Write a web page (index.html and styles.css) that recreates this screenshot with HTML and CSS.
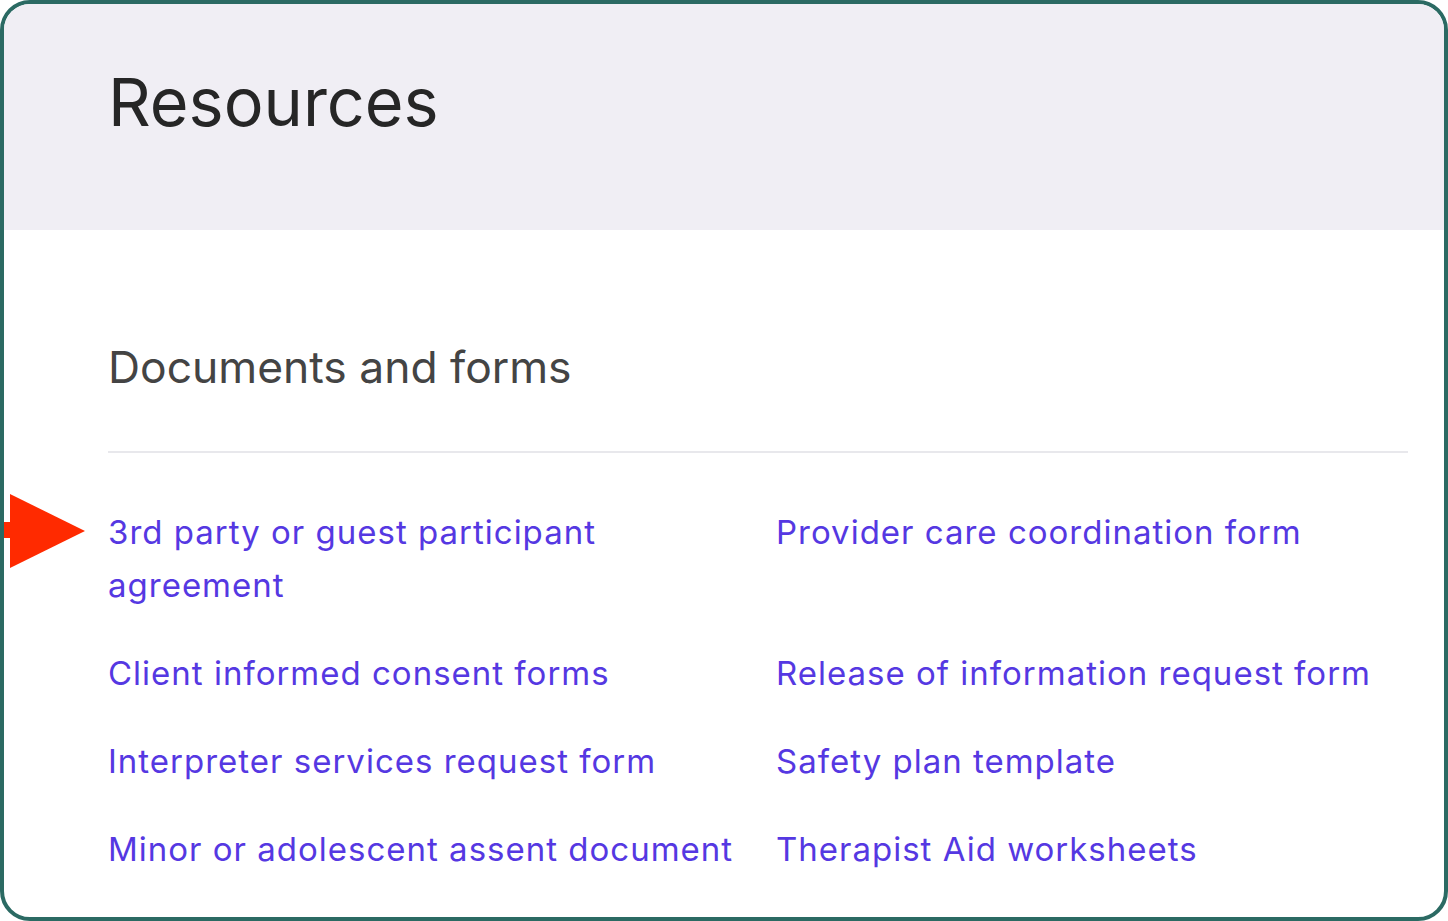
FILE: index.html
```html
<!DOCTYPE html>
<html lang="en">
<head>
    <meta charset="UTF-8">
    <meta name="viewport" content="width=device-width, initial-scale=1.0">
    <title>Resources</title>
    <link rel="stylesheet" href="styles.css">
</head>
<body>

    <div class="frame">
        <header class="page-header">
            <h1>Resources</h1>
        </header>

        <section class="content">
            <h2>Documents and forms</h2>

            <div class="link-grid">
                <div class="link-item">
                    <!-- Flecha que marca el primer documento -->
                    <svg class="pointer" width="86" height="76" viewBox="0 0 86 76">
                        <rect x="0" y="29" width="12" height="16" fill="#ff2a00"/>
                        <polygon points="10,1 85,38 10,75" fill="#ff2a00"/>
                    </svg>
                    <a href="#">3rd party or guest participant agreement</a>
                </div>
                <div class="link-item"><a href="#">Provider care coordination form</a></div>
                <div class="link-item"><a href="#">Client informed consent forms</a></div>
                <div class="link-item"><a href="#">Release of information request form</a></div>
                <div class="link-item"><a href="#">Interpreter services request form</a></div>
                <div class="link-item"><a href="#">Safety plan template</a></div>
                <div class="link-item"><a href="#">Minor or adolescent assent document</a></div>
                <div class="link-item"><a href="#">Therapist Aid worksheets</a></div>
            </div>
        </section>
    </div>

</body>
</html>
```

FILE: styles.css
```css
/* Estilo general */
body {
    font-family: Inter, "Noto Sans", sans-serif;
    background-color: #ffffff;
    margin: 0;
    padding: 0;
}
.frame {
    box-sizing: border-box;
    width: 1448px;
    height: 921px;
    border: 4px solid #2b6a63;
    border-radius: 30px;
    overflow: hidden;
    background-color: #fff;
}
.page-header {
    background-color: #f0eef4;
    height: 226px;
    padding: 0 104px;
    display: flex;
    align-items: center;
}
.page-header h1 {
    font-size: 66.5px;
    font-weight: 400;
    color: #262626;
    margin: 0;
    padding-bottom: 30px;
}
.content {
    padding: 110px 36px 0 104px;
}
.content h2 {
    font-size: 44.4px;
    font-weight: 400;
    color: #444;
    margin: 0;
    padding-bottom: 57px;
    border-bottom: 2px solid #e8e8ec;
}
.link-grid {
    display: grid;
    grid-template-columns: 1fr 1fr;
    column-gap: 36px;
    row-gap: 35px;
    padding-top: 53px;
}
.link-item {
    position: relative;
    font-size: 33px;
    line-height: 53px;
    letter-spacing: 1px;
}
.link-item a {
    color: #5538e2;
    text-decoration: none;
}
.pointer {
    position: absolute;
    left: -108px;
    top: -13px;
}
```
